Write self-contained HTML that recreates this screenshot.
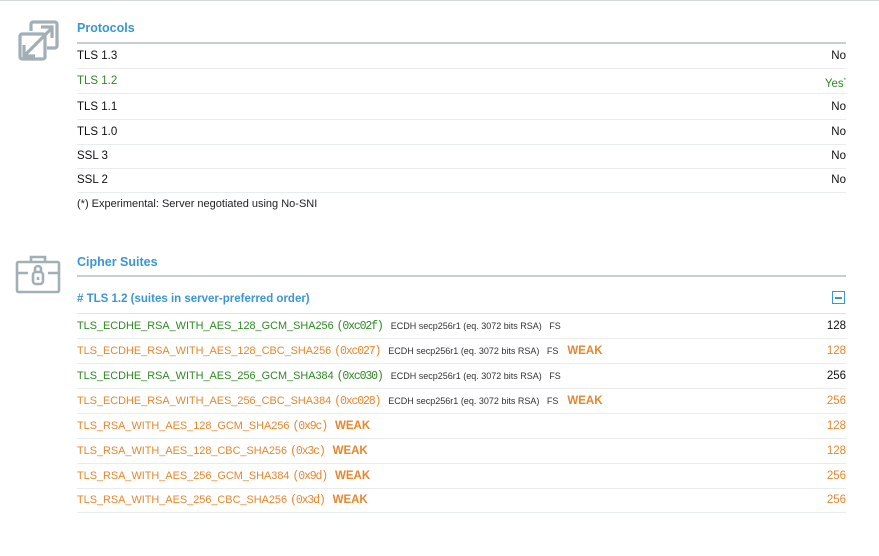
<!DOCTYPE html>
<html><head><style>
body{margin:0;width:879px;height:556px;background:#fff;font-family:"Liberation Sans",Arial,sans-serif;position:relative;overflow:hidden;color:#111}
.top{position:absolute;left:0;top:0;width:879px;height:1px;background:#d6d9dc}
.h{position:absolute;left:77px;color:#3a96d6;font-weight:bold;font-size:12.5px}
.hl{position:absolute;left:77px;width:769px;height:2px;background:#c6ced3}
.r{position:absolute;left:77px;width:769px;height:24px;border-bottom:1px solid #e9ecee;font-size:11.5px;line-height:24px;white-space:nowrap}
.c{font-size:10.9px}
.r .v{position:absolute;right:0;top:0;font-size:11.5px}
.g{color:#2e8a23}.o{color:#e8862c}
.m{font-family:"Liberation Mono",monospace;font-size:11.5px;letter-spacing:-1.15px}
.s{font-size:9px;color:#333;margin-left:8px}
.w{font-weight:bold;margin-left:9px;font-size:11.5px}
</style></head><body>
<div class="top"></div>
<svg style="position:absolute;left:14px;top:18px" width="50" height="46" viewBox="0 0 50 46" fill="none" stroke="#a3afb6" stroke-width="3.2">
<path d="M17 13V6a2 2 0 0 1 2-2h22a2 2 0 0 1 2 2v22a2 2 0 0 1-2 2h-8"/>
<rect x="6" y="16" width="25" height="25" rx="2"/>
<path d="M10 38L38 10M27 9h11v11M10 27v11h11"/>
</svg>
<svg style="position:absolute;left:14px;top:254px" width="50" height="42" viewBox="0 0 50 42" fill="none" stroke="#a3afb6" stroke-width="2.6">
<rect x="3" y="8" width="42" height="30" rx="1.5"/>
<path d="M17 8V3h14v5M3 19h11M34 19h11"/>
<rect x="19" y="18" width="10" height="12" rx="3"/>
<path d="M21 18v-3a3 3 0 0 1 6 0v3M24 23v3"/>
</svg>
<div class="h" style="top:21px">Protocols</div>
<div class="hl" style="top:42px"></div>
<div class="r" style="top:44px">TLS 1.3<span class="v">No</span></div>
<div class="r g" style="top:69px">TLS 1.2<span class="v">Yes<sup style="font-size:6px">*</sup></span></div>
<div class="r" style="top:95px">TLS 1.1<span class="v">No</span></div>
<div class="r" style="top:120px">TLS 1.0<span class="v">No</span></div>
<div class="r" style="top:144px">SSL 3<span class="v">No</span></div>
<div class="r" style="top:168px">SSL 2<span class="v">No</span></div>
<div style="position:absolute;left:77px;top:198px;font-size:11px;color:#222">(*) Experimental: Server negotiated using No-SNI</div>
<div class="h" style="top:255px">Cipher Suites</div>
<div class="hl" style="top:275px"></div>
<div class="h" style="top:293px;font-size:11.5px"># TLS 1.2 (suites in server-preferred order)</div>
<div style="position:absolute;left:832px;top:291px;width:11px;height:11px;border:1px solid #3a96d6"><div style="position:absolute;left:2px;top:5px;width:7px;height:2px;background:#3a96d6"></div></div>
<div style="position:absolute;left:77px;top:313px;width:769px;height:1px;background:#dde2e5"></div>
<div class="r c g" style="top:314px">TLS_ECDHE_RSA_WITH_AES_128_GCM_SHA256 <span class="m">(0xc02f)</span><span class="s">ECDH secp256r1 (eq. 3072 bits RSA)&nbsp;&nbsp; FS</span><span class="v" style="color:#111">128</span></div>
<div class="r c o" style="top:339px">TLS_ECDHE_RSA_WITH_AES_128_CBC_SHA256 <span class="m">(0xc027)</span><span class="s">ECDH secp256r1 (eq. 3072 bits RSA)&nbsp;&nbsp; FS</span><span class="w">WEAK</span><span class="v">128</span></div>
<div class="r c g" style="top:364px">TLS_ECDHE_RSA_WITH_AES_256_GCM_SHA384 <span class="m">(0xc030)</span><span class="s">ECDH secp256r1 (eq. 3072 bits RSA)&nbsp;&nbsp; FS</span><span class="v" style="color:#111">256</span></div>
<div class="r c o" style="top:389px">TLS_ECDHE_RSA_WITH_AES_256_CBC_SHA384 <span class="m">(0xc028)</span><span class="s">ECDH secp256r1 (eq. 3072 bits RSA)&nbsp;&nbsp; FS</span><span class="w">WEAK</span><span class="v">256</span></div>
<div class="r c o" style="top:414px">TLS_RSA_WITH_AES_128_GCM_SHA256 <span class="m">(0x9c)</span><span class="w" style="margin-left:8px">WEAK</span><span class="v">128</span></div>
<div class="r c o" style="top:439px">TLS_RSA_WITH_AES_128_CBC_SHA256 <span class="m">(0x3c)</span><span class="w" style="margin-left:8px">WEAK</span><span class="v">128</span></div>
<div class="r c o" style="top:464px">TLS_RSA_WITH_AES_256_GCM_SHA384 <span class="m">(0x9d)</span><span class="w" style="margin-left:8px">WEAK</span><span class="v">256</span></div>
<div class="r c o" style="top:488px">TLS_RSA_WITH_AES_256_CBC_SHA256 <span class="m">(0x3d)</span><span class="w" style="margin-left:8px">WEAK</span><span class="v">256</span></div>
</body></html>
